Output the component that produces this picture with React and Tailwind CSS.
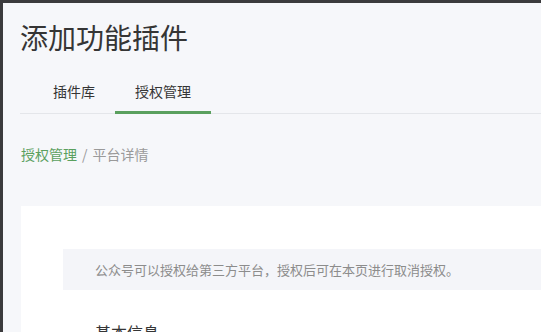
export default function App() {
  const font = { fontFamily: '"Noto Sans CJK SC", "Noto Sans", sans-serif' };

  return (
    <div className="w-[541px] h-[332px] overflow-hidden bg-[#3b3b3d] pt-[3px] pl-[3px]" style={font}>
      <div className="h-full bg-[#f6f7fa] pl-[17px]">
        <h1 className="pt-[14px] text-[28px] leading-[40px] text-[#353535] font-normal">添加功能插件</h1>

        <div className="mt-[23px] flex items-start border-b border-[#e4e6ea] pl-[13px]">
          <div className="px-[20px] text-[14px] leading-[22px] text-[#353535]">插件库</div>
          <div className="-mb-[1px] border-b-[3px] border-[#5aa05e] px-[20px] pb-[9px] text-[14px] leading-[22px] text-[#353535]">
            授权管理
          </div>
        </div>

        <div className="mt-[29px] pl-[1px] flex text-[14px] leading-[22px]">
          <span className="text-[#5aa05e]">授权管理</span>
          <span className="mx-[5px] text-[#9a9a9a]">/</span>
          <span className="text-[#9a9a9a]">平台详情</span>
        </div>

        <div className="mt-[41px] ml-[1px] bg-white pt-[43px] pl-[42px]">
          <div className="bg-[#f4f5f9] h-[41px] flex items-center pl-[32px] text-[13px] text-[#8c8c8c]">
            公众号可以授权给第三方平台，授权后可在本页进行取消授权。
          </div>
          <div className="mt-[30px] pl-[32px] text-[16px] leading-[24px] text-[#353535]">基本信息</div>
        </div>
      </div>
    </div>
  );
}
